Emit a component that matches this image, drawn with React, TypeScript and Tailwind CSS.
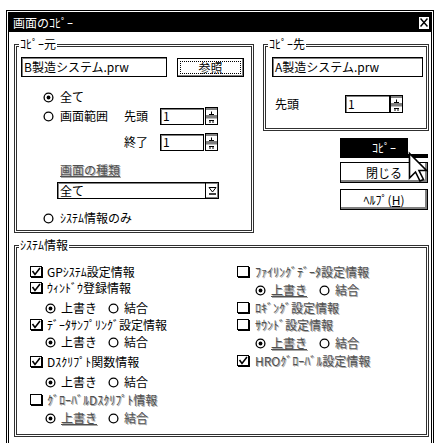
import React from "react";

const DIM = "text-[#505050] [text-shadow:1px_1px_0_#a8a8a8]";

function Radio({ on }: { on?: boolean }) {
  return (
    <svg width="11" height="11" viewBox="0 0 11 11" className="block shrink-0">
      <circle cx="5.5" cy="5.5" r="4.4" fill="#fff" stroke="#000" strokeWidth="1.3" />
      {on && <circle cx="5.5" cy="5.5" r="1.9" fill="#000" />}
    </svg>
  );
}

function Check({ on }: { on?: boolean }) {
  return (
    <svg width="13" height="12" viewBox="0 0 13 12" className="block shrink-0">
      <rect x="0.5" y="0.5" width="11" height="10" fill="#fff" stroke="#000" />
      <path d="M1 11.5H13M12.5 1V12" stroke="#000" />
      {on && <path d="M2.5 5 L5 8.5 L10 2" stroke="#000" strokeWidth="1.6" fill="none" />}
    </svg>
  );
}

function Spin() {
  return (
    <svg width="13" height="18" viewBox="0 0 13 18" className="block shrink-0">
      <rect x="0.5" y="0.5" width="12" height="17" fill="#fff" stroke="#000" />
      <line x1="0" y1="9" x2="13" y2="9" stroke="#000" />
      <rect x="1" y="1" width="11" height="2" fill="#808080" />
      <rect x="1" y="9.5" width="11" height="2" fill="#808080" />
      <path d="M4 7.5 H9 M6.5 4.5 V7.5" stroke="#000" />
      <path d="M4 13.5 H9 M5 13.5 V16 M8 13.5 V16" stroke="#000" />
    </svg>
  );
}

function Field({ className, children }: { className?: string; children?: React.ReactNode }) {
  return (
    <div
      className={`flex items-center border border-black bg-white pl-[2px] shadow-[inset_1px_1px_0_#808080] ${className ?? ""}`}
    >
      {children}
    </div>
  );
}

function Group({
  label,
  className,
  children,
}: {
  label: string;
  className?: string;
  children?: React.ReactNode;
}) {
  return (
    <div className={`relative border-[3px] border-double border-[#303030] ${className ?? ""}`}>
      <span className="absolute left-[2px] top-[-10px] bg-white px-[1px] leading-[14px]">{label}</span>
      {children}
    </div>
  );
}

function RadioPair({ dim, ml, w }: { dim?: boolean; ml: string; w: string }) {
  return (
    <div className={`flex h-[14px] items-center ${ml} ${dim ? DIM : ""}`}>
      <Radio on />
      <span className={`ml-[5px] ${w} ${dim ? "underline" : ""}`}>上書き</span>
      <Radio />
      <span className="ml-[5px]">結合</span>
    </div>
  );
}

function CheckRow({
  on,
  dim,
  gap,
  children,
}: {
  on?: boolean;
  dim?: boolean;
  gap: string;
  children: React.ReactNode;
}) {
  return (
    <div className={`flex h-[14px] items-center ${gap}`}>
      <Check on={on} />
      <span className={dim ? DIM : ""}>{children}</span>
    </div>
  );
}

export default function App() {
  return (
    <div className="relative h-[443px] w-[434px] overflow-hidden bg-white font-['Noto_Sans_CJK_JP',sans-serif] text-[12px] leading-[14px] text-black">
      <div className="ml-[6px] mt-[10px] flex h-[470px] w-[428px] flex-col border-[3px] border-double border-black">
        {/* title bar */}
        <div className="flex h-[19px] items-center justify-between bg-black pl-[4px] pr-[1px]">
          <span className="text-white">画面のｺﾋﾟｰ</span>
          <div className="flex h-[14px] w-[12px] items-center justify-center border border-black bg-white">
            <svg width="8" height="9" viewBox="0 0 8 9">
              <path d="M0.5 0.5 L7.5 8.5 M7.5 0.5 L0.5 8.5" stroke="#000" strokeWidth="1.5" />
            </svg>
          </div>
        </div>

        {/* body */}
        <div className="flex flex-col pl-[5px] pr-[2px] pt-[12px]">
          <div className="flex gap-[9px]">
            {/* copy source */}
            <Group label="ｺﾋﾟｰ元" className="flex h-[189px] w-[240px] flex-col">
              <div className="ml-[4px] mt-[10px] flex items-start">
                <Field className="h-[20px] w-[146px]">B製造システム.prw</Field>
                <div className="ml-[10px] mt-[1px] flex h-[19px] w-[67px] items-center justify-center border border-black bg-white p-[2px] shadow-[inset_-1px_-1px_0_#808080]">
                  <div className="flex h-full w-full items-center justify-center border border-dotted border-black">
                    参照
                  </div>
                </div>
              </div>

              <div className="ml-[26px] mt-[13px] flex h-[14px] items-center gap-[6px]">
                <Radio on />
                <span>全て</span>
              </div>

              <div className="ml-[26px] mt-[3px] flex h-[18px] items-center">
                <div className="flex w-[81px] items-center gap-[6px]">
                  <Radio />
                  <span>画面範囲</span>
                </div>
                <span className="w-[36px]">先頭</span>
                <Field className="h-[17px] w-[44px]">1</Field>
                <div className="ml-[1px]">
                  <Spin />
                </div>
              </div>

              <div className="ml-[107px] mt-[8px] flex h-[18px] items-center">
                <span className="w-[36px]">終了</span>
                <Field className="h-[17px] w-[44px]">1</Field>
                <div className="ml-[1px]">
                  <Spin />
                </div>
              </div>

              <div className={`ml-[43px] mt-[12px] h-[14px] underline ${DIM}`}>画面の種類</div>

              <div className="ml-[40px] mt-[5px] flex h-[17px] w-[162px] items-center border border-black bg-white shadow-[inset_1px_1px_0_#808080]">
                <span className="flex-1 pl-[2px]">全て</span>
                <div className="flex h-full w-[13px] items-center justify-center border-l border-black shadow-[inset_-1px_-1px_0_#808080]">
                  <svg width="9" height="9" viewBox="0 0 9 9">
                    <path d="M1 1.5 H8 L4.5 6 Z" fill="#fff" stroke="#000" />
                    <path d="M1 8 H8" stroke="#000" strokeWidth="1.5" />
                  </svg>
                </div>
              </div>

              <div className="ml-[26px] mt-[12px] flex h-[14px] items-center gap-[6px]">
                <Radio />
                <span>ｼｽﾃﾑ情報のみ</span>
              </div>
            </Group>

            {/* right column */}
            <div className="flex w-[166px] flex-col">
              <Group label="ｺﾋﾟｰ先" className="flex h-[87px] flex-col">
                <Field className="ml-[6px] mt-[10px] h-[20px] w-[151px]">A製造システム.prw</Field>
                <div className="ml-[9px] mt-[18px] flex h-[18px] items-center">
                  <span className="w-[70px]">先頭</span>
                  <Field className="h-[18px] w-[45px]">1</Field>
                  <Spin />
                </div>
              </Group>

              <div className="flex flex-col items-end pr-[1px]">
                <div className="mt-[7px] flex h-[20px] w-[88px] items-center justify-center border border-black bg-black text-white">
                  ｺﾋﾟｰ
                </div>
                <div className="mt-[4px] flex h-[21px] w-[88px] items-center justify-center border border-black bg-white shadow-[inset_-2px_-2px_0_#808080]">
                  閉じる
                </div>
                <div className="mt-[6px] flex h-[21px] w-[88px] items-center justify-center border border-black bg-white shadow-[inset_-2px_-2px_0_#808080]">
                  <span>
                    ﾍﾙﾌﾟ(<span className="underline">H</span>)
                  </span>
                </div>
              </div>
            </div>
          </div>

          {/* system info */}
          <Group label="ｼｽﾃﾑ情報" className="mt-[12px] grid h-[192px] grid-cols-[207px_1fr] pl-[13px] pt-[17px]">
            <div className="flex flex-col">
              <CheckRow on gap="gap-[4px]">GPｼｽﾃﾑ設定情報</CheckRow>
              <div className="mt-[2px]">
                <CheckRow on gap="gap-[4px]">ｳｨﾝﾄﾞｳ登録情報</CheckRow>
              </div>
              <div className="mt-[6px]">
                <RadioPair ml="ml-[15px]" w="w-[47px]" />
              </div>
              <div className="mt-[3px]">
                <CheckRow on gap="gap-[4px]">ﾃﾞｰﾀｻﾝﾌﾟﾘﾝｸﾞ設定情報</CheckRow>
              </div>
              <div className="mt-[3px]">
                <RadioPair ml="ml-[15px]" w="w-[47px]" />
              </div>
              <div className="mt-[6px]">
                <CheckRow on gap="gap-[4px]">Dｽｸﾘﾌﾟﾄ関数情報</CheckRow>
              </div>
              <div className="mt-[6px]">
                <RadioPair ml="ml-[15px]" w="w-[47px]" />
              </div>
              <div className="mt-[4px]">
                <CheckRow dim gap="gap-[4px]">ｸﾞﾛｰﾊﾞﾙDｽｸﾘﾌﾟﾄ情報</CheckRow>
              </div>
              <div className="mt-[4px]">
                <RadioPair dim ml="ml-[15px]" w="w-[47px]" />
              </div>
            </div>
            <div className="flex flex-col">
              <CheckRow dim gap="gap-[5px]">ﾌｧｲﾘﾝｸﾞﾃﾞｰﾀ設定情報</CheckRow>
              <div className="mt-[4px]">
                <RadioPair dim ml="ml-[18px]" w="w-[48px]" />
              </div>
              <div className="mt-[4px]">
                <CheckRow dim gap="gap-[5px]">ﾛｷﾞﾝｸﾞ設定情報</CheckRow>
              </div>
              <div className="mt-[3px]">
                <CheckRow dim gap="gap-[5px]">ｻｳﾝﾄﾞ設定情報</CheckRow>
              </div>
              <div className="mt-[4px]">
                <RadioPair dim ml="ml-[18px]" w="w-[48px]" />
              </div>
              <div className="mt-[4px]">
                <CheckRow on dim gap="gap-[5px]">HROｸﾞﾛｰﾊﾞﾙ設定情報</CheckRow>
              </div>
            </div>
          </Group>
        </div>
      </div>

      {/* mouse cursor */}
      <svg
        width="22"
        height="48"
        viewBox="0 0 22 48"
        className="absolute left-[408px] top-[137px]"
      >
        <rect x="0" y="0" width="22" height="17" fill="#fff" />
        <path
          d="M1.5 16.5 L1.5 41 L7.5 35 L12 44 L15.5 42.5 L11 33.5 L18.5 33.5 Z"
          fill="#fff"
          stroke="#000"
          strokeWidth="1.6"
          strokeLinejoin="miter"
        />
      </svg>
    </div>
  );
}
